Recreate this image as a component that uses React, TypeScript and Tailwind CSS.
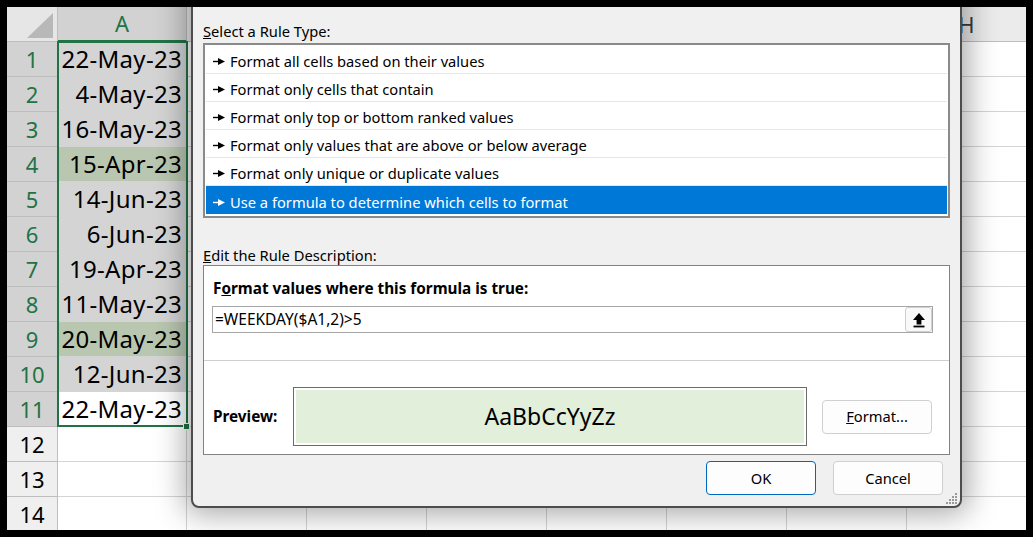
import React from "react";

const dates = ["22-May-23", "4-May-23", "16-May-23", "15-Apr-23", "14-Jun-23", "6-Jun-23", "19-Apr-23", "11-May-23", "20-May-23", "12-Jun-23", "22-May-23"];
const weekend = new Set([3, 8]);
const cols = ["B", "C", "D", "E", "F", "G", "H"];
const rules = [
  "Format all cells based on their values",
  "Format only cells that contain",
  "Format only top or bottom ranked values",
  "Format only values that are above or below average",
  "Format only unique or duplicate values",
  "Use a formula to determine which cells to format",
];

function Pointer({ color }: { color: string }) {
  return (
    <svg width="12" height="9" viewBox="0 0 12 9" className="mr-[5px] shrink-0">
      <path d="M0 4.5h6" stroke={color} strokeWidth="1.4" />
      <path d="M5 1l7 3.5-7 3.5z" fill={color} />
    </svg>
  );
}

function Grip() {
  const dots = [[9, 0], [6, 3], [9, 3], [3, 6], [6, 6], [9, 6], [0, 9], [3, 9], [6, 9], [9, 9]];
  return (
    <svg width="12" height="12" viewBox="0 0 12 12" className="absolute bottom-px right-[2px]">
      {dots.map(([x, y]) => <rect key={`${x}-${y}`} x={x} y={y} width="2" height="2" fill="#9a9a9a" />)}
    </svg>
  );
}

export default function App() {
  return (
    <div className="h-[537px] w-[1033px] bg-black p-[7px] font-['Noto_Sans',sans-serif]">
      <div className="relative h-[523px] w-[1019px] overflow-hidden bg-white">
        <div className="grid grid-cols-[51px_129px_repeat(7,120px)] grid-rows-[35px_repeat(14,35px)]">
          <div className="relative border-b border-r border-[#bdbdbd] bg-[#e6e6e6]">
            <svg width="51" height="35" className="absolute left-0 top-0">
              <polygon points="20,31 46,31 46,6" fill="#b8b8b8" />
            </svg>
          </div>
          <div className="flex items-center justify-center border-b-2 border-r border-b-[#217346] border-r-[#bdbdbd] bg-[#d2d2d2] text-[22px] text-[#217346]">A</div>
          {cols.map((c) => (
            <div key={c} className="flex items-center justify-center border-b border-r border-[#bdbdbd] bg-[#ebebeb] text-[22px] text-[#3a3a3a]">{c}</div>
          ))}
          {Array.from({ length: 14 }, (_, r) => {
            const inSel = r < 11;
            const date = dates[r];
            let cellBg = "bg-white";
            if (r < 10) cellBg = weekend.has(r) ? "bg-[#b9c7b0]" : "bg-[#d4d4d4]";
            return (
              <React.Fragment key={r}>
                <div className={`flex items-center justify-center border-b border-r border-[#bdbdbd] text-[22px] ${inSel ? "bg-[#d2d2d2] text-[#217346]" : "bg-[#efefef] text-black"}`}>{r + 1}</div>
                <div className={`flex items-center justify-end border-b border-r border-[#d4d4d4] pr-[4px] text-[24px] tracking-[0.3px] text-black ${cellBg}`}>{date}</div>
                {cols.map((c) => <div key={c} className="border-b border-r border-[#d4d4d4]" />)}
              </React.Fragment>
            );
          })}
        </div>

        <div className="absolute left-[50px] top-[34px] h-[386px] w-[131px] border-2 border-[#217346]" />
        <div className="absolute left-[176px] top-[416px] h-[7px] w-[7px] border border-white bg-[#217346]" />

        <div className="absolute left-[184px] top-[-30px] h-[531px] w-[771px] rounded-b-[8px] border-2 border-[#4d4d4d] bg-[#f0f0f0] px-[10px] pt-[40px] text-[14.7px] text-black shadow-[0_0_30px_6px_rgba(0,0,0,0.35)]">
          <div className="h-[20px] pt-[2px] leading-[20px]"><span className="underline">S</span>elect a Rule Type:</div>
          <div className="mt-[4px] h-[175px] border-2 border-[#8a8a8a] bg-white p-px">
            {rules.map((r, i) => (
              <div key={r} className={`flex h-[28px] items-center pl-[7px] pt-[4px] ${i === 5 ? "bg-[#0078d7] text-white" : "border-b border-[#e6e6e6]"}`}>
                <Pointer color={i === 5 ? "#ffffff" : "#000000"} />
                <span>{r}</span>
              </div>
            ))}
          </div>

          <div className="mt-[25px] h-[20px] pt-[2px] leading-[20px]"><span className="underline">E</span>dit the Rule Description:</div>
          <div className="mt-[2px] h-[190px] border border-[#828282] bg-white">
            <div className="px-[8px] pt-[12px]">
              <div className="h-[20px] pl-px text-[15.3px] font-bold leading-[20px]">F<span className="underline">o</span>rmat values where this formula is true:</div>
              <div className="mt-[8px] flex h-[27px] w-[721px] items-center border border-[#a6a6a6] pl-[2px]">
                <span className="flex-1 text-[15.5px]">=WEEKDAY($A1,2)&gt;5</span>
                <div className="flex h-[25px] w-[27px] items-center justify-center rounded-[3px] border border-[#cfcfcf] bg-[#f9f9f9]">
                  <svg width="14" height="16" viewBox="0 0 14 16">
                    <path d="M7 1L1 8h3.6v4.5h4.8V8H13z" fill="#000" />
                    <rect x="1.5" y="13.6" width="11" height="1.8" fill="#000" />
                  </svg>
                </div>
              </div>
            </div>
            <div className="mt-[27px] h-px bg-[#cfcfcf]" />
            <div className="mt-[26px] flex h-[59px] items-center">
              <div className="w-[89px] pl-[9px] text-[15.3px] font-bold">Preview:</div>
              <div className="h-[59px] w-[514px] border border-[#6b6b6b] p-[2px]">
                <div className="flex h-full items-center justify-center bg-[#e2efda] text-[23px] text-black">AaBbCcYyZz</div>
              </div>
              <button className="ml-[15px] h-[34px] w-[110px] rounded-[4px] border border-[#d0d0d0] bg-[#fdfdfd] text-[14.7px]"><span className="underline">F</span>ormat...</button>
            </div>
          </div>

          <div className="mt-[6px] flex justify-end gap-[17px] pr-[7px]">
            <button className="h-[34px] w-[110px] rounded-[4px] border border-[#0067c0] bg-[#fdfdfd] text-[14.7px]">OK</button>
            <button className="h-[34px] w-[110px] rounded-[4px] border border-[#d0d0d0] bg-[#fdfdfd] text-[14.7px]">Cancel</button>
          </div>
          <Grip />
        </div>
      </div>
    </div>
  );
}
